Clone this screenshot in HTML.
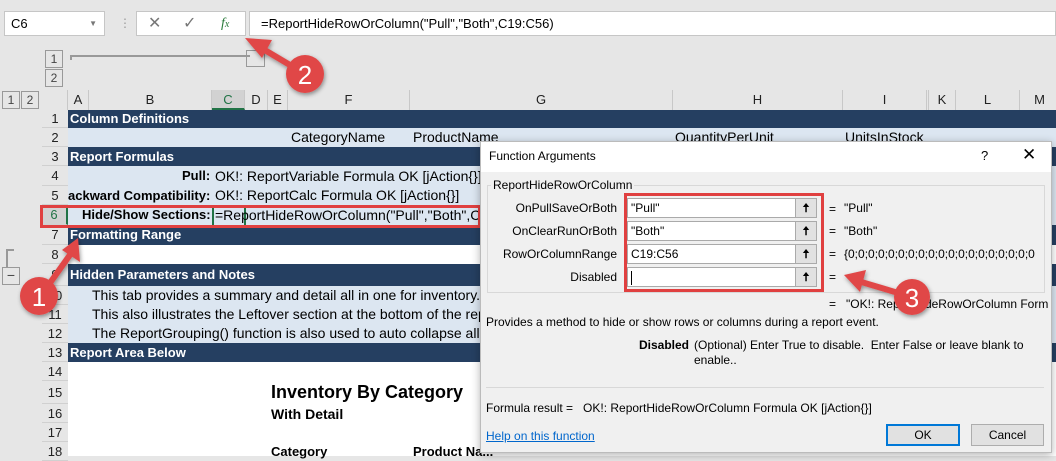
<!DOCTYPE html>
<html><head><meta charset="utf-8"><style>
*{margin:0;padding:0;box-sizing:border-box}
body{width:1056px;height:456px;overflow:hidden;background:#e6e6e6;font-family:"Liberation Sans",sans-serif;position:relative;font-size:13px;color:#000}
.a{position:absolute;white-space:nowrap}
.ch{position:absolute;top:90px;height:20px;border-right:1px solid #c8c8c8;text-align:center;font-size:13px;line-height:20px;color:#222;background:#e6e6e6}
.rh{position:absolute;left:42px;width:26px;text-align:center;font-size:13px;color:#222;border-bottom:1px solid #d0d0d0;background:#e6e6e6}
.dark{position:absolute;left:68px;width:988px;background:#253f61;color:#fff;font-weight:bold;font-size:13px;padding-left:2px}
.lt{position:absolute;left:68px;width:988px;background:#dce6f1;font-size:14px}
.lt b{font-size:13px}
.wh{position:absolute;left:68px;width:988px;background:#fff}
.lbl{position:absolute;right:0;font-size:12px;color:#000;text-align:right}
.inp{position:absolute;left:627px;width:190px;height:20px;background:#fff;border:1px solid #aaa;font-size:12px;line-height:18px;padding-left:3px}
.btn{position:absolute;right:0;top:0;width:21px;height:18px;background:#e1e1e1;border-left:1px solid #aaa;text-align:center;font-size:12px;font-weight:bold;line-height:18px}
</style></head><body>
<div class="a" style="left:4px;top:11px;width:101px;height:25px;background:#fff;border:1px solid #c6c6c6;font-size:13px;line-height:23px;padding-left:6px">C6<span style="position:absolute;right:7px;top:0;font-size:8px;color:#777">▼</span></div>
<div class="a" style="left:119px;top:16px;color:#999;font-size:12px">⋮</div>
<div class="a" style="left:136px;top:11px;width:110px;height:25px;background:#fff;border:1px solid #c6c6c6;font-size:16px;line-height:23px;color:#777"><span style="position:absolute;left:11px">✕</span><span style="position:absolute;left:46px">✓</span><span style="position:absolute;left:84px;color:#2a7a3a;font-style:italic;font-family:'Liberation Serif',serif;font-size:14px">f<span style="font-size:10px">x</span></span></div>
<div class="a" style="left:249px;top:11px;width:807px;height:25px;background:#fff;border:1px solid #c6c6c6;font-size:13px;line-height:23px;padding-left:11px">=ReportHideRowOrColumn("Pull","Both",C19:C56)</div>
<div class="a" style="left:45px;top:50px;width:18px;height:18px;border:1px solid #999;font-size:12px;text-align:center;line-height:16px;color:#444">1</div>
<div class="a" style="left:45px;top:69px;width:18px;height:18px;border:1px solid #999;font-size:12px;text-align:center;line-height:16px;color:#444">2</div>
<div class="a" style="left:70px;top:55px;width:180px;height:2px;background:#999"></div>
<div class="a" style="left:70px;top:55px;width:2px;height:5px;background:#999"></div>
<div class="a" style="left:246px;top:50px;width:19px;height:17px;border:1px solid #999"></div>
<div class="a" style="left:2px;top:91px;width:18px;height:18px;border:1px solid #999;font-size:12px;text-align:center;line-height:16px;color:#444">1</div>
<div class="a" style="left:21px;top:91px;width:18px;height:18px;border:1px solid #999;font-size:12px;text-align:center;line-height:16px;color:#444">2</div>
<div class="a" style="left:6px;top:249px;width:8px;height:18px;border-left:2px solid #999;border-top:2px solid #999"></div>
<div class="a" style="left:2px;top:267px;width:18px;height:18px;border:1px solid #999;font-size:14px;text-align:center;line-height:14px;color:#444">−</div>
<div class="a" style="left:42px;top:90px;width:26px;height:20px;border-right:1px solid #c8c8c8"></div>
<div class="ch" style="left:68px;width:21px">A</div>
<div class="ch" style="left:89px;width:123px">B</div>
<div class="ch" style="left:212px;width:33px;background:#d2d2d2;border-bottom:2px solid #217346;color:#217346">C</div>
<div class="ch" style="left:245px;width:23px">D</div>
<div class="ch" style="left:268px;width:20px">E</div>
<div class="ch" style="left:288px;width:122px">F</div>
<div class="ch" style="left:410px;width:263px">G</div>
<div class="ch" style="left:673px;width:170px">H</div>
<div class="ch" style="left:843px;width:84px">I</div>
<div class="ch" style="left:927px;width:2px"></div>
<div class="ch" style="left:929px;width:27px">K</div>
<div class="ch" style="left:956px;width:64px">L</div>
<div class="ch" style="left:1020px;width:40px">M</div>
<div class="rh" style="top:110px;height:18px;line-height:18px">1</div>
<div class="rh" style="top:128px;height:19px;line-height:19px">2</div>
<div class="rh" style="top:147px;height:19px;line-height:19px">3</div>
<div class="rh" style="top:166px;height:20px;line-height:20px">4</div>
<div class="rh" style="top:186px;height:19px;line-height:19px">5</div>
<div class="rh" style="top:205px;height:20px;line-height:20px;background:#d2d2d2;color:#217346;border-right:2px solid #217346">6</div>
<div class="rh" style="top:225px;height:20px;line-height:20px">7</div>
<div class="rh" style="top:245px;height:19px;line-height:19px">8</div>
<div class="rh" style="top:264px;height:22px;line-height:22px">9</div>
<div class="rh" style="top:286px;height:19px;line-height:19px">10</div>
<div class="rh" style="top:305px;height:19px;line-height:19px">11</div>
<div class="rh" style="top:324px;height:19px;line-height:19px">12</div>
<div class="rh" style="top:343px;height:19px;line-height:19px">13</div>
<div class="rh" style="top:362px;height:19px;line-height:19px">14</div>
<div class="rh" style="top:381px;height:23px;line-height:23px">15</div>
<div class="rh" style="top:404px;height:19px;line-height:19px">16</div>
<div class="rh" style="top:423px;height:19px;line-height:19px">17</div>
<div class="rh" style="top:442px;height:19px;line-height:19px">18</div>
<div class="dark" style="top:110px;height:18px;line-height:18px">Column Definitions</div>
<div class="lt" style="top:128px;height:19px;line-height:19px"><span class="a" style="left:223px">CategoryName</span><span class="a" style="left:345px">ProductName</span><span class="a" style="left:607px">QuantityPerUnit</span><span class="a" style="left:777px">UnitsInStock</span></div>
<div class="dark" style="top:147px;height:19px;line-height:19px">Report Formulas</div>
<div class="lt" style="top:166px;height:20px;line-height:20px"><b class="a" style="left:114px">Pull:</b><span class="a" style="left:147px">OK!: ReportVariable Formula OK [jAction{}]</span></div>
<div class="lt" style="top:186px;height:19px;line-height:19px;overflow:hidden"><b class="a" style="left:0">ackward Compatibility:</b><span class="a" style="left:147px">OK!: ReportCalc Formula OK [jAction{}]</span></div>
<div class="lt" style="top:205px;height:20px;line-height:20px"><b class="a" style="left:14px">Hide/Show Sections:</b><span class="a" style="left:144px;top:0;width:34px;height:20px;border:2px solid #217346;border-bottom:0"></span><span class="a" style="left:147px">=ReportHideRowOrColumn("Pull","Both",C</span></div>
<div class="dark" style="top:225px;height:20px;line-height:20px">Formatting Range</div>
<div class="wh" style="top:245px;height:19px"></div>
<div class="dark" style="top:264px;height:22px;line-height:22px">Hidden Parameters and Notes</div>
<div class="lt" style="top:286px;height:57px;line-height:19px"><div style="padding-left:24px">This tab provides a summary and detail all in one for inventory.</div><div style="padding-left:24px">This also illustrates the Leftover section at the bottom of the report.</div><div style="padding-left:24px">The ReportGrouping() function is also used to auto collapse all the</div></div>
<div class="dark" style="top:343px;height:19px;line-height:19px">Report Area Below</div>
<div class="wh" style="top:362px;height:94px"><span class="a" style="left:203px;top:20px;font-size:18px;font-weight:bold">Inventory By Category</span><span class="a" style="left:203px;top:44px;font-size:14px;font-weight:bold">With Detail</span><span class="a" style="left:203px;top:82px;font-size:13px;font-weight:bold">Category</span><span class="a" style="left:345px;top:82px;font-size:13px;font-weight:bold">Product Na...</span></div>
<div class="a" style="left:40px;top:205px;width:441px;height:23px;border:3px solid #e04040"></div>
<div class="a" style="left:480px;top:141px;width:572px;height:312px;background:#f0f0f0;border:1px solid #bbb;box-shadow:0 2px 8px rgba(0,0,0,.3)">
 <div class="a" style="left:0;top:0;width:570px;height:30px;background:#fff"></div>
 <div class="a" style="left:8px;top:7px;font-size:12px">Function Arguments</div>
 <div class="a" style="left:500px;top:6px;font-size:13px">?</div>
 <div class="a" style="left:541px;top:3px;font-size:17px">✕</div>
 <div class="a" style="left:6px;top:43px;width:558px;height:108px;border:1px solid #d8d8d8"></div>
 <div class="a" style="left:10px;top:36px;font-size:12px;background:#f0f0f0;padding:0 2px">ReportHideRowOrColumn</div>
</div>
<div class="a" style="left:480px;top:200px;width:137px;height:100px">
 <div class="lbl" style="top:1px">OnPullSaveOrBoth</div>
 <div class="lbl" style="top:24px">OnClearRunOrBoth</div>
 <div class="lbl" style="top:47px">RowOrColumnRange</div>
 <div class="lbl" style="top:70px">Disabled</div>
</div>
<div class="inp" style="top:198px">"Pull"<div class="btn">🠅</div></div>
<div class="inp" style="top:221px">"Both"<div class="btn">🠅</div></div>
<div class="inp" style="top:244px">C19:C56<div class="btn">🠅</div></div>
<div class="inp" style="top:267px"><span style="border-left:1px solid #000;height:14px;display:inline-block;vertical-align:middle"></span><div class="btn">🠅</div></div>
<div class="a" style="left:624px;top:193px;width:200px;height:99px;border:3px solid #e04040"></div>
<div class="a" style="left:829px;top:201px;font-size:12px;line-height:16px">=</div>
<div class="a" style="left:829px;top:224px;font-size:12px">=</div>
<div class="a" style="left:829px;top:247px;font-size:12px">=</div>
<div class="a" style="left:829px;top:270px;font-size:12px">=</div>
<div class="a" style="left:844px;top:201px;font-size:12px">"Pull"</div>
<div class="a" style="left:844px;top:224px;font-size:12px">"Both"</div>
<div class="a" style="left:844px;top:247px;font-size:12px;width:192px;overflow:hidden">{0;0;0;0;0;0;0;0;0;0;0;0;0;0;0;0;0;0;0;0;0;0;0;0;</div>
<div class="a" style="left:829px;top:297px;font-size:12px">=&nbsp;&nbsp;&nbsp;"OK!: ReportHideRowOrColumn Form</div>
<div class="a" style="left:486px;top:315px;font-size:12px">Provides a method to hide or show rows or columns during a report event.</div>
<div class="a" style="left:639px;top:338px;font-size:12px;font-weight:bold">Disabled</div>
<div class="a" style="left:694px;top:338px;font-size:12px;line-height:15px;white-space:normal;width:340px">(Optional) Enter True to disable.&nbsp; Enter False or leave blank to enable..</div>
<div class="a" style="left:486px;top:387px;width:558px;height:1px;background:#d8d8d8"></div>
<div class="a" style="left:486px;top:401px;font-size:12px">Formula result =&nbsp;&nbsp;&nbsp;OK!: ReportHideRowOrColumn Formula OK [jAction{}]</div>
<div class="a" style="left:486px;top:429px;font-size:12px;color:#0066cc;text-decoration:underline">Help on this function</div>
<div class="a" style="left:886px;top:424px;width:74px;height:22px;background:#e1e1e1;border:2px solid #0078d7;font-size:12px;text-align:center;line-height:18px">OK</div>
<div class="a" style="left:971px;top:424px;width:73px;height:22px;background:#e1e1e1;border:1px solid #adadad;font-size:12px;text-align:center;line-height:20px">Cancel</div>
<svg class="a" style="left:0;top:0" width="1056" height="456">
<defs><filter id="s"><feDropShadow dx="1" dy="2" stdDeviation="2" flood-opacity=".4"/></filter></defs>
<g fill="#e04747" stroke="#e04747" filter="url(#s)">
<line x1="295" y1="68" x2="258" y2="46" stroke-width="6"/><polygon points="245,38 272,40 262,58" stroke="none"/>
<line x1="45" y1="290" x2="72" y2="252" stroke-width="6"/><polygon points="78,238 80,262 62,250" stroke="none"/>
<line x1="905" y1="295" x2="858" y2="281" stroke-width="6"/><polygon points="844,275 866,270 860,292" stroke="none"/>
<circle cx="305" cy="74" r="19" stroke="none"/>
<circle cx="39" cy="296" r="19" stroke="none"/>
<circle cx="912" cy="297" r="18" stroke="none"/>
</g>
<g fill="#fff" font-family="Liberation Sans" font-size="26" text-anchor="middle">
<text x="305" y="84">2</text><text x="39" y="306">1</text><text x="912" y="307">3</text>
</g>
</svg>
</body></html>
